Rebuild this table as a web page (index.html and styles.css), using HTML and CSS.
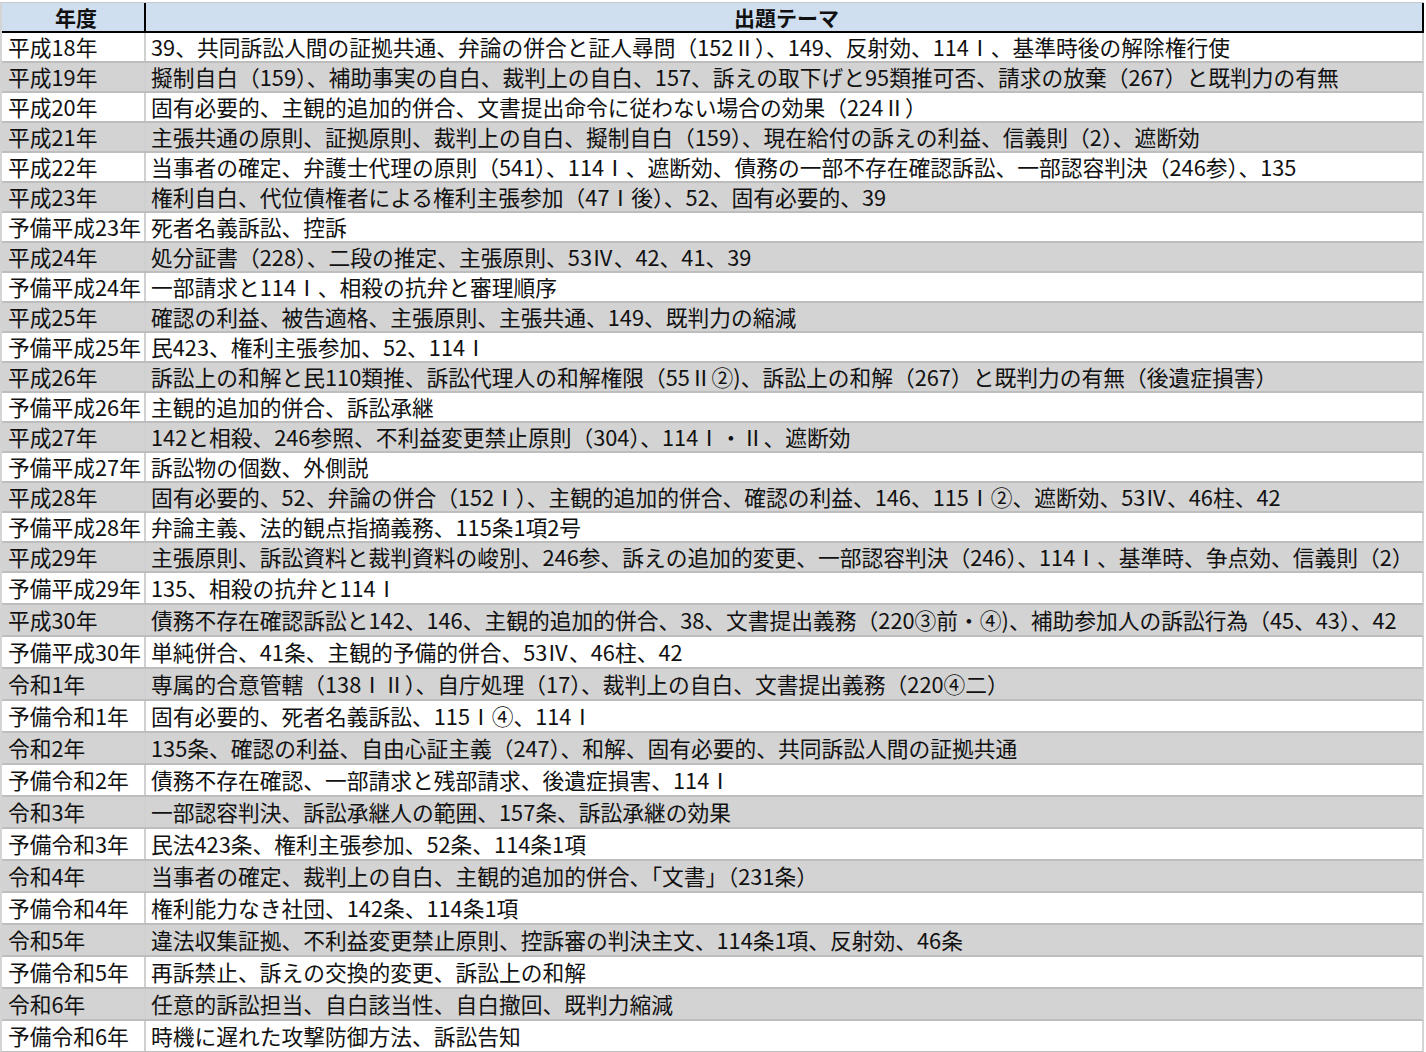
FILE: index.html
```html
<!DOCTYPE html>
<html lang="ja">
<head>
<meta charset="utf-8">
<title>出題テーマ</title>
<link rel="stylesheet" href="styles.css">
</head>
<body>
<div class="sheet">
  <div class="row head"><div class="c1">年度</div><div class="c2">出題テーマ</div></div>
  <div class="row"><div class="c1">平成18年</div><div class="c2">39、共同訴訟人間の証拠共通、弁論の併合と証人尋問（152Ⅱ）、149、反射効、114Ⅰ、基準時後の解除権行使</div></div>
  <div class="row"><div class="c1">平成19年</div><div class="c2">擬制自白（159）、補助事実の自白、裁判上の自白、157、訴えの取下げと95類推可否、請求の放棄（267）と既判力の有無</div></div>
  <div class="row"><div class="c1">平成20年</div><div class="c2">固有必要的、主観的追加的併合、文書提出命令に従わない場合の効果（224Ⅱ）</div></div>
  <div class="row"><div class="c1">平成21年</div><div class="c2">主張共通の原則、証拠原則、裁判上の自白、擬制自白（159）、現在給付の訴えの利益、信義則（2）、遮断効</div></div>
  <div class="row"><div class="c1">平成22年</div><div class="c2">当事者の確定、弁護士代理の原則（541）、114Ⅰ、遮断効、債務の一部不存在確認訴訟、一部認容判決（246参）、135</div></div>
  <div class="row"><div class="c1">平成23年</div><div class="c2">権利自白、代位債権者による権利主張参加（47Ⅰ後）、52、固有必要的、39</div></div>
  <div class="row"><div class="c1">予備平成23年</div><div class="c2">死者名義訴訟、控訴</div></div>
  <div class="row"><div class="c1">平成24年</div><div class="c2">処分証書（228）、二段の推定、主張原則、53Ⅳ、42、41、39</div></div>
  <div class="row"><div class="c1">予備平成24年</div><div class="c2">一部請求と114Ⅰ、相殺の抗弁と審理順序</div></div>
  <div class="row"><div class="c1">平成25年</div><div class="c2">確認の利益、被告適格、主張原則、主張共通、149、既判力の縮減</div></div>
  <div class="row"><div class="c1">予備平成25年</div><div class="c2">民423、権利主張参加、52、114Ⅰ</div></div>
  <div class="row"><div class="c1">平成26年</div><div class="c2">訴訟上の和解と民110類推、訴訟代理人の和解権限（55Ⅱ②)、訴訟上の和解（267）と既判力の有無（後遺症損害）</div></div>
  <div class="row"><div class="c1">予備平成26年</div><div class="c2">主観的追加的併合、訴訟承継</div></div>
  <div class="row"><div class="c1">平成27年</div><div class="c2">142と相殺、246参照、不利益変更禁止原則（304）、114Ⅰ・Ⅱ、遮断効</div></div>
  <div class="row"><div class="c1">予備平成27年</div><div class="c2">訴訟物の個数、外側説</div></div>
  <div class="row"><div class="c1">平成28年</div><div class="c2">固有必要的、52、弁論の併合（152Ⅰ）、主観的追加的併合、確認の利益、146、115Ⅰ②、遮断効、53Ⅳ、46柱、42</div></div>
  <div class="row"><div class="c1">予備平成28年</div><div class="c2">弁論主義、法的観点指摘義務、115条1項2号</div></div>
  <div class="row"><div class="c1">平成29年</div><div class="c2">主張原則、訴訟資料と裁判資料の峻別、246参、訴えの追加的変更、一部認容判決（246）、114Ⅰ、基準時、争点効、信義則（2）</div></div>
  <div class="row"><div class="c1">予備平成29年</div><div class="c2">135、相殺の抗弁と114Ⅰ</div></div>
  <div class="row"><div class="c1">平成30年</div><div class="c2">債務不存在確認訴訟と142、146、主観的追加的併合、38、文書提出義務（220③前・④)、補助参加人の訴訟行為（45、43）、42</div></div>
  <div class="row"><div class="c1">予備平成30年</div><div class="c2">単純併合、41条、主観的予備的併合、53Ⅳ、46柱、42</div></div>
  <div class="row"><div class="c1">令和1年</div><div class="c2">専属的合意管轄（138ⅠⅡ）、自庁処理（17）、裁判上の自白、文書提出義務（220④二）</div></div>
  <div class="row"><div class="c1">予備令和1年</div><div class="c2">固有必要的、死者名義訴訟、115Ⅰ④、114Ⅰ</div></div>
  <div class="row"><div class="c1">令和2年</div><div class="c2">135条、確認の利益、自由心証主義（247）、和解、固有必要的、共同訴訟人間の証拠共通</div></div>
  <div class="row"><div class="c1">予備令和2年</div><div class="c2">債務不存在確認、一部請求と残部請求、後遺症損害、114Ⅰ</div></div>
  <div class="row"><div class="c1">令和3年</div><div class="c2">一部認容判決、訴訟承継人の範囲、157条、訴訟承継の効果</div></div>
  <div class="row"><div class="c1">予備令和3年</div><div class="c2">民法423条、権利主張参加、52条、114条1項</div></div>
  <div class="row"><div class="c1">令和4年</div><div class="c2">当事者の確定、裁判上の自白、主観的追加的併合、「文書」（231条）</div></div>
  <div class="row"><div class="c1">予備令和4年</div><div class="c2">権利能力なき社団、142条、114条1項</div></div>
  <div class="row"><div class="c1">令和5年</div><div class="c2">違法収集証拠、不利益変更禁止原則、控訴審の判決主文、114条1項、反射効、46条</div></div>
  <div class="row"><div class="c1">予備令和5年</div><div class="c2">再訴禁止、訴えの交換的変更、訴訟上の和解</div></div>
  <div class="row"><div class="c1">令和6年</div><div class="c2">任意的訴訟担当、自白該当性、自白撤回、既判力縮減</div></div>
  <div class="row"><div class="c1">予備令和6年</div><div class="c2">時機に遅れた攻撃防御方法、訴訟告知</div></div>
</div>
</body>
</html>
```

FILE: styles.css
```css
html, body {
  margin: 0;
  padding: 0;
  background: #ffffff;
}
body {
  font-family: "Noto Sans CJK JP", "Noto Sans", sans-serif;
  color: #111111;
}
.sheet {
  width: 1424px;
  margin-top: 2px;
  border-top: 1px solid #c8c8c8;
  border-left: 2px solid #d4d4d4;
  box-sizing: border-box;
}
.row {
  display: grid;
  grid-template-columns: 144px 1fr;
  height: 30px;
  box-sizing: border-box;
  border-bottom: 2px solid #bdbdbd;
  border-right: 2px solid #d4d4d4;
  font-size: 21.75px;
  line-height: 28px;
  white-space: nowrap;
}
.row:nth-child(n+20) {
  height: 32px;
  line-height: 30px;
}
.row:nth-child(odd) {
  background: #d3d3d3;
}
.row:nth-child(even) {
  background: #ffffff;
}
.c1 {
  padding-left: 6px;
  border-right: 2px solid #d0d0d0;
}
.c2 {
  padding-left: 5px;
}
.row.head {
  height: 30px;
  background: #cfdff0;
  border-bottom: 2px solid #000000;
  border-right: 2px solid #000000;
  font-weight: bold;
  text-align: center;
  line-height: 28px;
  font-size: 21px;
}
.row.head .c1 {
  border-right: 2px solid #000000;
}
```
